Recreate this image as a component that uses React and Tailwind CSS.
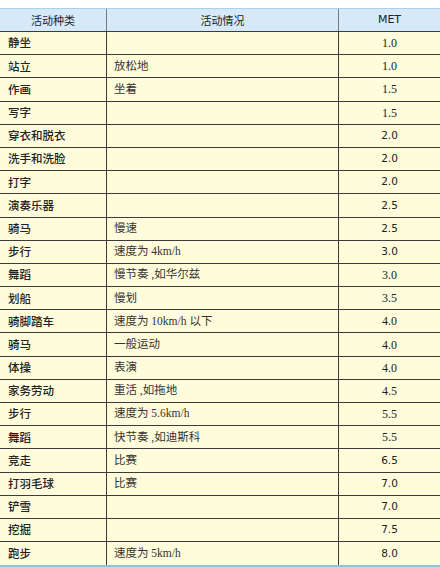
const rows = [
  ["静坐", "", "1.0", "s"],
  ["站立", "放松地", "1.0", "s"],
  ["作画", "坐着", "1.5", "s"],
  ["写字", "", "1.5", "s"],
  ["穿衣和脱衣", "", "2.0", "v"],
  ["洗手和洗脸", "", "2.0", "v"],
  ["打字", "", "2.0", "v"],
  ["演奏乐器", "", "2.5", "v"],
  ["骑马", "慢速", "2.5", "v"],
  ["步行", "速度为 4km/h", "3.0", "v"],
  ["舞蹈", "慢节奏 ,如华尔兹", "3.0", "s"],
  ["划船", "慢划", "3.5", "s"],
  ["骑脚踏车", "速度为 10km/h 以下", "4.0", "s"],
  ["骑马", "一般运动", "4.0", "s"],
  ["体操", "表演", "4.0", "s"],
  ["家务劳动", "重活 ,如拖地", "4.5", "s"],
  ["步行", "速度为 5.6km/h", "5.5", "s"],
  ["舞蹈", "快节奏 ,如迪斯科", "5.5", "s"],
  ["竞走", "比赛", "6.5", "v"],
  ["打羽毛球", "比赛", "7.0", "v"],
  ["铲雪", "", "7.0", "v"],
  ["挖掘", "", "7.5", "v"],
  ["跑步", "速度为 5km/h", "8.0", "v"],
];

export default function App() {
  return (
    <div className="w-[440px] h-[567px] bg-white pt-[8px] overflow-hidden" style={{ fontFamily: '"Noto Sans CJK SC", "Noto Sans", sans-serif' }}>
      <div className="grid grid-cols-[107px_232px_1fr] h-[24px] bg-[#d6e9f9] border-t border-t-[#a9d1ec] border-b border-b-[#3c3c3c] text-[11px] text-[#222]">
        <div className="flex items-center justify-center border-r border-r-[#6f7a84]">活动种类</div>
        <div className="flex items-center justify-center border-r border-r-[#6f7a84]">活动情况</div>
        <div className="flex items-center justify-center" style={{ fontFamily: '"DejaVu Sans", sans-serif' }}>MET</div>
      </div>
      {rows.map((r, i) => (
        <div
          key={i}
          className={
            i === rows.length - 1
              ? "grid grid-cols-[107px_232px_1fr] h-[25.2px] bg-[#fffcdb] border-b-2 border-b-[#8fc3d6] text-[11.5px] text-[#222]"
              : "grid grid-cols-[107px_232px_1fr] h-[23.2px] bg-[#fffcdb] border-b border-b-[#3c3c3c] text-[11.5px] text-[#222]"
          }
        >
          <div className="flex items-center pl-[8px] border-r border-r-[#3c3c3c] font-medium">{r[0]}</div>
          <div className="flex items-center pl-[7px] border-r border-r-[#3c3c3c] text-[#333]" style={{ fontFamily: '"Liberation Serif", "Noto Sans CJK SC", serif' }}>{r[1]}</div>
          <div
            className={r[3] === "s" ? "flex items-center justify-center text-[12px]" : "flex items-center justify-center text-[10.5px]"}
            style={{ fontFamily: r[3] === "s" ? '"Liberation Serif", serif' : '"DejaVu Sans", sans-serif' }}
          >
            {r[2]}
          </div>
        </div>
      ))}
    </div>
  );
}
